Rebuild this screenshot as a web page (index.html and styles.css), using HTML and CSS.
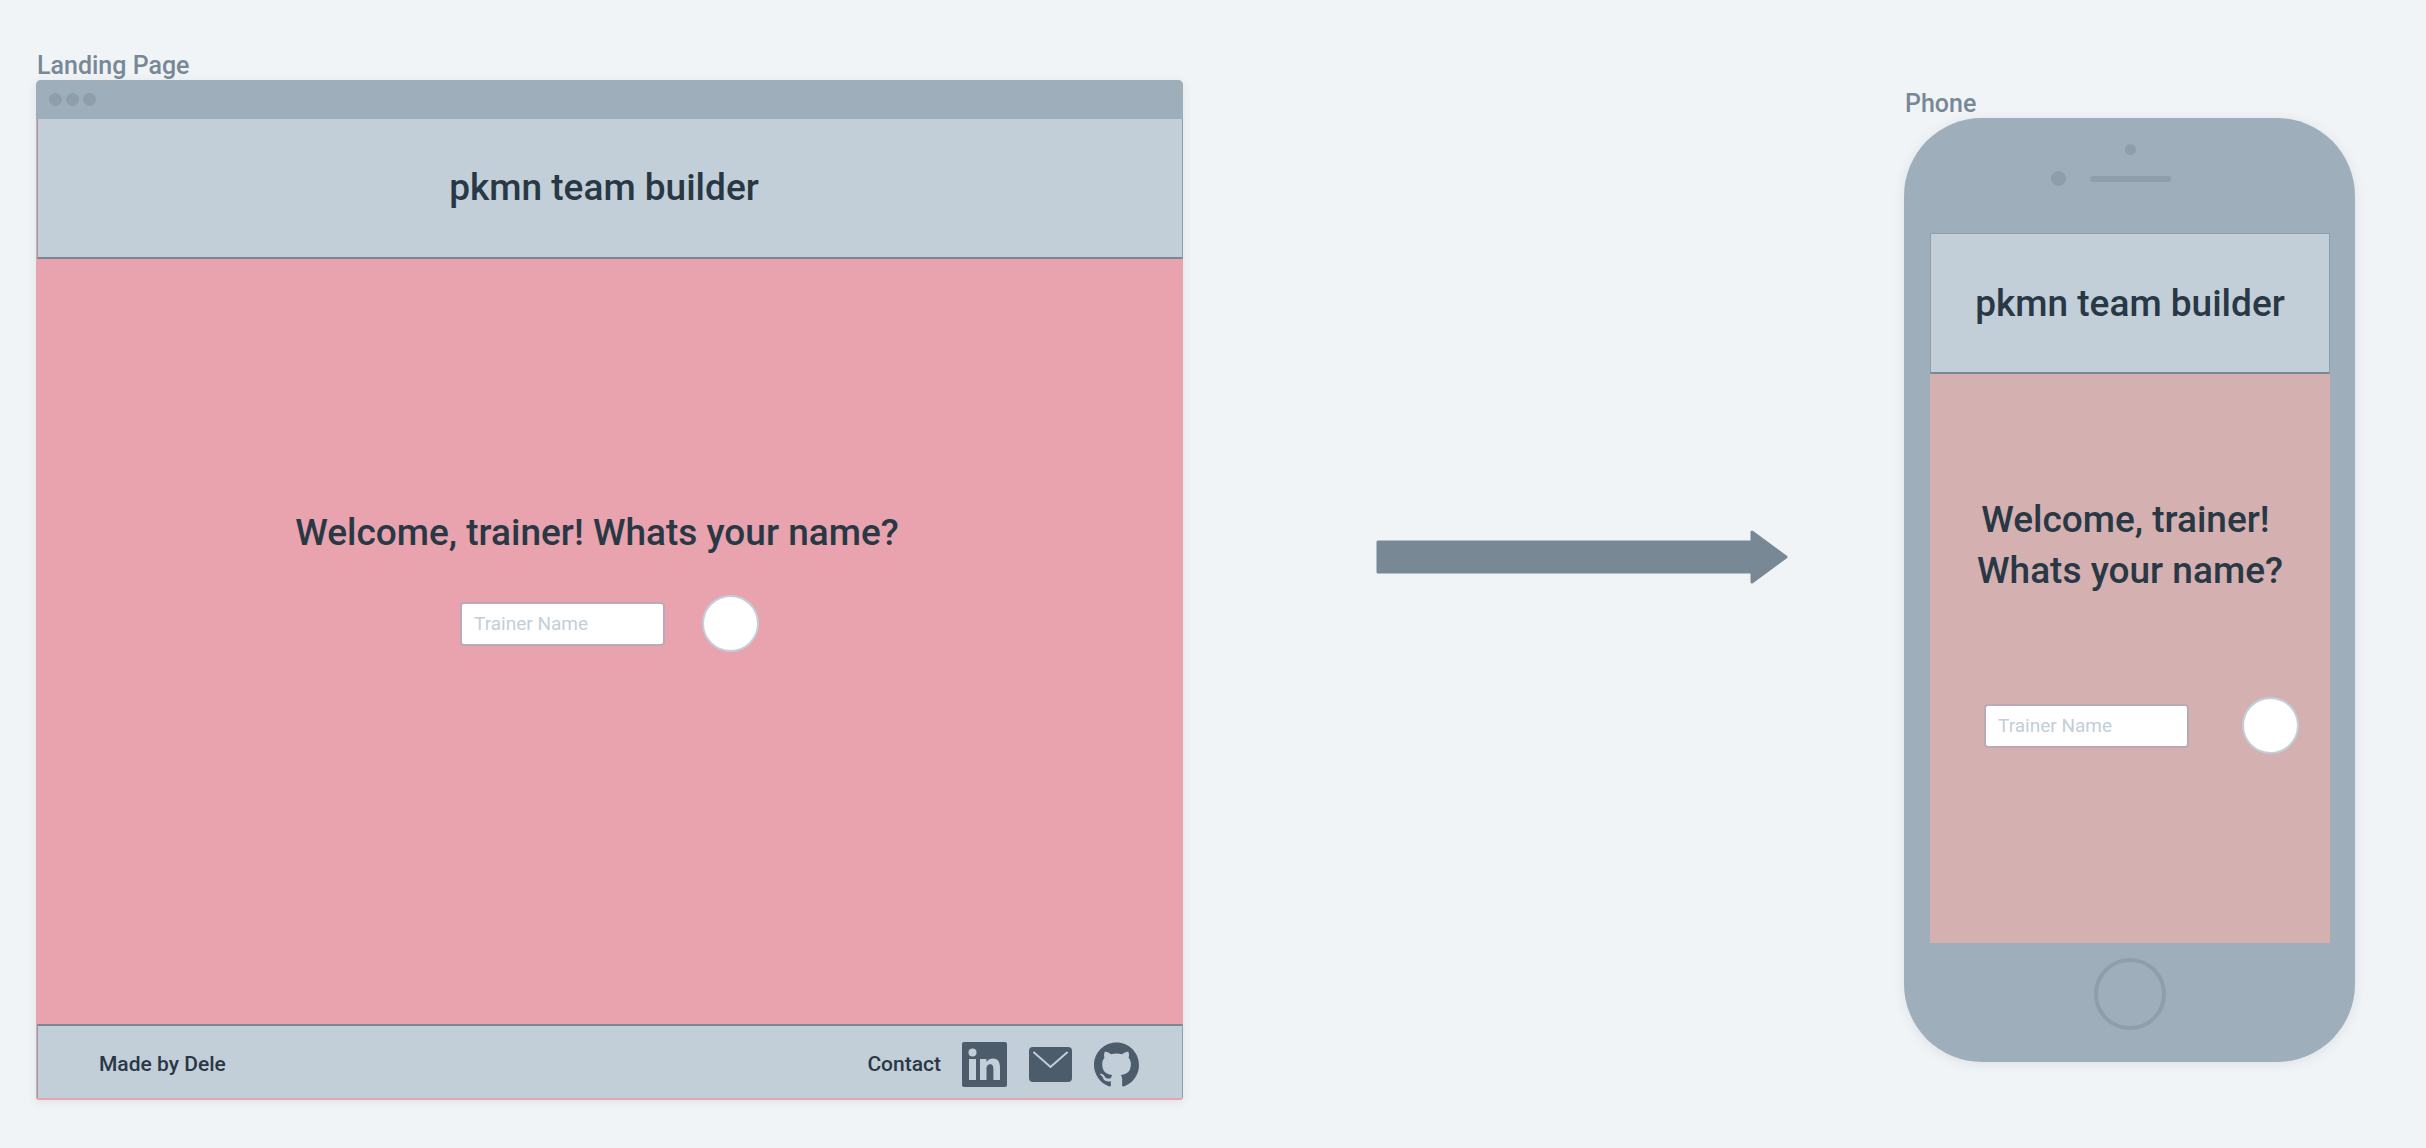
FILE: index.html
```html
<!DOCTYPE html>
<html lang="en">
<head>
<meta charset="utf-8">
<meta name="viewport" content="width=device-width, initial-scale=1">
<title>pkmn team builder</title>
<link rel="stylesheet" href="styles.css">
</head>
<body>
<main class="board">
  <section class="frame frame-landing">
    <h2 class="frame-label">Landing Page</h2>
    <div class="browser">
      <div class="browser-bar"><span class="dot"></span><span class="dot"></span><span class="dot"></span></div>
      <header class="site-header"><h1 class="site-title">pkmn team builder</h1></header>
      <div class="welcome">
        <p class="question">Welcome, trainer! Whats your name?</p>
        <form class="name-form">
          <input class="name-input" type="text" placeholder="Trainer Name" aria-label="Trainer Name">
          <button class="go" type="button" aria-label="Continue"></button>
        </form>
      </div>
      <footer class="site-footer">
        <span>Made by Dele</span>
        <nav class="contact">
          <span>Contact</span>
          <a href="#linkedin" aria-label="LinkedIn"><svg class="icon" viewBox="0 0 45 45"><rect width="45" height="45" rx="2"/><g class="cut"><circle cx="10.5" cy="10.5" r="4"/><path d="M7 17h7v21H7zM18 17h6.500v3c1.500-2.500 4-3.600 6.500-3.600 5.500 0 7 4 7 9.600v12h-6.600V27.500c0-3-.5-5.300-3.200-5.300-3 0-3.700 2.300-3.700 5.300V38H18z"/></g></svg></a>
          <a href="#mail" aria-label="Email"><svg class="icon" viewBox="0 0 45 45"><rect x="1" y="5" width="43" height="35" rx="4"/><path class="fold" d="M6 10.500l16.500 14.500L39 10.500"/></svg></a>
          <a href="#github" aria-label="GitHub"><svg class="icon" viewBox="0 0 16 16"><path d="M8 .2C3.580.2 0 3.780 0 8.200c0 3.540 2.290 6.530 5.470 7.590.4.070.55-.17.55-.38 0-.19-.01-.82-.01-1.490-2.010.37-2.530-.49-2.690-.94-.09-.23-.48-.94-.82-1.130-.28-.15-.68-.52-.01-.53.63-.01 1.080.58 1.230.82.72 1.210 1.870.87 2.330.66.07-.52.28-.87.51-1.070-1.780-.2-3.640-.89-3.640-3.950 0-.87.31-1.590.82-2.150-.08-.2-.36-1.020.08-2.120 0 0 .67-.21 2.200.82.64-.18 1.320-.27 2-.27s1.360.09 2 .27c1.530-1.040 2.200-.82 2.200-.82.44 1.100.16 1.920.08 2.120.51.56.82 1.270.82 2.150 0 3.070-1.870 3.750-3.650 3.950.29.25.54.73.54 1.480 0 1.070-.01 1.930-.01 2.200 0 .21.15.46.55.38A8.010 8.010 0 0 0 16 8.200C16 3.780 12.420.2 8 .2z"/></svg></a>
        </nav>
      </footer>
    </div>
  </section>

  <svg class="arrow" viewBox="0 0 412 54" aria-hidden="true"><path d="M2 12H376V2L410 27L376 52V42H2z"/></svg>

  <section class="frame frame-phone">
    <h2 class="frame-label">Phone</h2>
    <div class="phone">
      <div class="phone-top">
        <span class="sensor"></span>
        <div class="ear"><span class="camera"></span><span class="speaker"></span></div>
      </div>
      <div class="screen">
        <header class="site-header"><h1 class="site-title">pkmn team builder</h1></header>
        <div class="welcome">
          <p class="question">Welcome, trainer!&nbsp;<br>Whats your name?</p>
          <form class="name-form">
            <input class="name-input" type="text" placeholder="Trainer Name" aria-label="Trainer Name">
            <button class="go" type="button" aria-label="Continue"></button>
          </form>
        </div>
      </div>
      <button class="home" type="button" aria-label="Home"></button>
    </div>
  </section>
</main>
</body>
</html>
```
FILE: styles.css
```css
* {
  box-sizing: border-box;
}

body {
  margin: 0;
  background: #f0f4f7;
  color: #293845;
  font-family: Roboto, "Liberation Sans", sans-serif;
  font-weight: 500;
}

h1, h2, p {
  margin: 0;
  font-weight: 500;
}

.board {
  display: grid;
  grid-template-columns: minmax(0, 1fr) 412px 567px;
  align-items: start;
  padding: 52px 71px 48px 36px;
}

.frame-landing {
  margin-right: 193px;
}

.frame-phone {
  margin-top: 38px;
  margin-left: 116px;
}

.frame-label {
  padding-left: 1px;
  color: #788896;
  font-size: 25px;
  line-height: 28px;
}

.browser {
  overflow: hidden;
  border-radius: 5px 5px 3px 3px;
  background: #e8a3ae;
  padding-bottom: 2px;
  box-shadow: 0 2px 10px rgba(60, 70, 80, 0.1);
}

.browser-bar {
  display: flex;
  align-items: center;
  gap: 4px;
  height: 39px;
  padding-left: 13px;
  background: #9faebb;
}

.dot {
  width: 13px;
  height: 13px;
  border-radius: 50%;
  background: #8e9fac;
}

.site-header {
  display: flex;
  align-items: center;
  justify-content: center;
  height: 140px;
  border: 1px solid #8e9fac;
  border-bottom: 2px solid #788896;
  background: #c2ced8;
}

.site-title,
.question {
  font-size: 37px;
  line-height: 51px;
}

.browser .site-header {
  margin-left: 1px;
  padding: 0 12px 2px 0;
  border-top: 0;
}

.browser .welcome {
  display: flex;
  flex-direction: column;
  align-items: center;
  gap: 37px;
  height: 765px;
  padding-top: 248px;
}

.browser .question {
  padding-right: 25px;
}

.name-form {
  display: flex;
  align-items: center;
  gap: 37px;
}

.name-input {
  width: 205px;
  height: 44px;
  padding: 0 12px;
  border: 2px solid #bba9b5;
  border-radius: 4px;
  background: #fff;
  color: #293845;
  font: 400 19px Roboto, "Liberation Sans", sans-serif;
}

.name-input::placeholder {
  color: #c2ced8;
  opacity: 1;
}

.go {
  width: 57px;
  height: 57px;
  padding: 0;
  border: 2px solid #c2ced8;
  border-radius: 50%;
  background: #fff;
}

.site-footer {
  display: flex;
  align-items: center;
  justify-content: space-between;
  height: 74px;
  margin-left: 1px;
  padding: 4px 43px 0 61px;
  border: 1px solid #8e9fac;
  border-top: 2px solid #788896;
  border-bottom: 0;
  background: #c2ced8;
  font-size: 21px;
}

.contact {
  display: flex;
  align-items: center;
  gap: 21px;
}

.contact a {
  display: flex;
}

.icon {
  width: 45px;
  height: 45px;
  fill: #4c5c6a;
}

.cut {
  fill: #c2ced8;
}

.fold {
  fill: none;
  stroke: #c2ced8;
  stroke-width: 2;
  stroke-linecap: round;
}

.arrow {
  width: 412px;
  height: 54px;
  margin-top: 478px;
  fill: #788894;
  stroke: #788894;
  stroke-width: 3;
  stroke-linejoin: round;
}

.phone {
  display: flex;
  flex-direction: column;
  align-items: center;
  padding: 0 25px 32px 26px;
  border-radius: 78px;
  background: #9faebb;
  box-shadow: 0 2px 12px rgba(60, 70, 80, 0.1);
}

.phone-top {
  display: flex;
  flex-direction: column;
  align-items: center;
  gap: 16px;
  width: 100%;
  height: 115px;
  padding-top: 26px;
}

.sensor {
  width: 11px;
  height: 11px;
  border-radius: 50%;
  background: #8e9fac;
}

.ear {
  display: flex;
  align-items: center;
  gap: 24px;
  padding-right: 39px;
}

.camera {
  width: 15px;
  height: 15px;
  border-radius: 50%;
  background: #8e9fac;
}

.speaker {
  width: 81px;
  height: 6px;
  border-radius: 3px;
  background: #8e9fac;
}

.screen {
  width: 100%;
  background: #d5b0b1;
}

.phone .site-header {
  height: 141px;
}

.phone .welcome {
  height: 569px;
  padding-top: 120px;
}

.phone .question {
  text-align: center;
}

.phone .name-form {
  justify-content: space-between;
  margin-top: 101px;
  padding: 0 31px 0 54px;
}

.home {
  width: 72px;
  height: 72px;
  margin-top: 15px;
  border: 4px solid #8e9fac;
  border-radius: 50%;
  background: none;
}
```
